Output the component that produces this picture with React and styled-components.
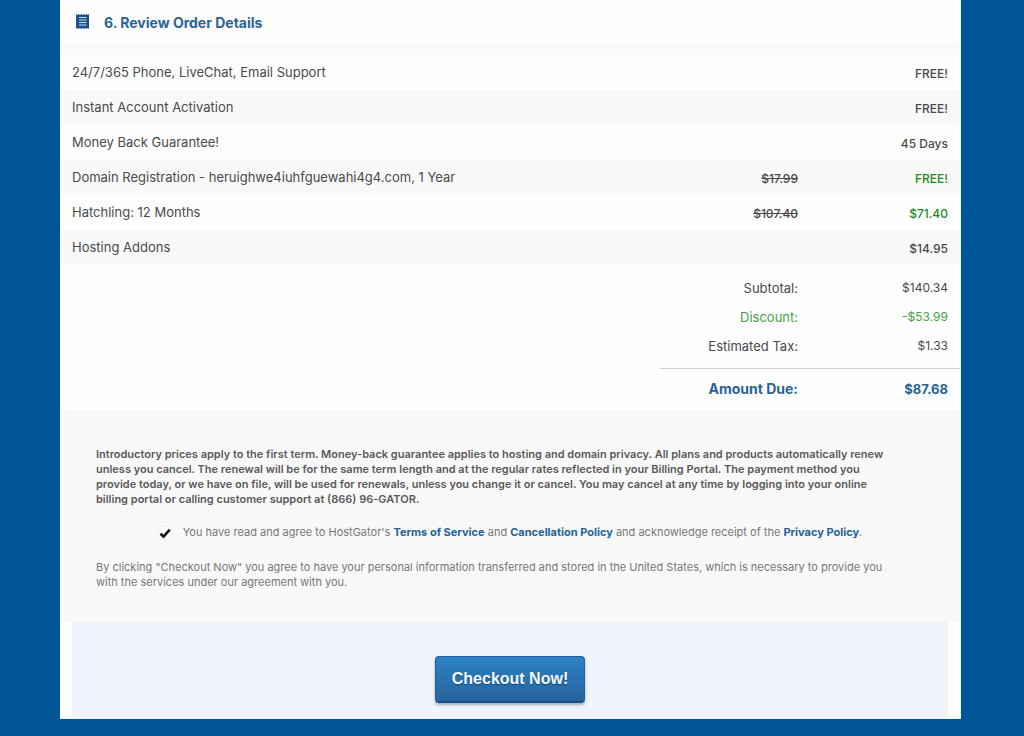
import React, { useState } from "react";
import styled, { createGlobalStyle } from "styled-components";

const GlobalStyle = createGlobalStyle`
  * {
    box-sizing: border-box;
  }
  body {
    margin: 0;
    background: #005596;
    color: #4a4a4a;
    font-family: Inter, "Liberation Sans", sans-serif;
    font-size: 13px;
  }
`;

const Page = styled.main`
  padding: 0 63px 17px 60px;
`;

const Card = styled.section`
  background: #fefefe;
  border: solid #e6f6fc;
  border-width: 0 1px 1px 0;
`;

const Header = styled.header`
  display: flex;
  align-items: center;
  gap: 14px;
  height: 55px;
  padding: 0 15px;
  border-bottom: 12px solid #f9f9f9;
`;

const Title = styled.h2`
  margin: 0;
  padding-top: 2px;
  color: #2a6396;
  font-size: 14px;
  font-weight: 700;
  line-height: 20px;
`;

const Table = styled.table`
  width: 100%;
  table-layout: fixed;
  border-collapse: collapse;
`;

const LabelCol = styled.col`
  width: 66.667%;
`;

const Row = styled.tr`
  height: 35px;
  &:nth-child(even) {
    background: #f9f9f9;
  }
`;

const Label = styled.th`
  padding: 0 12px 1px;
  font-weight: 400;
  text-align: left;
`;

const Price = styled.td`
  padding: 2px 12px 0;
  color: ${({ $free }) => ($free ? "#228b22" : "#4a4a4a")};
  font-size: 12px;
  font-weight: 500;
  text-align: right;
`;

const Totals = styled.dl`
  margin: 0;
  padding: 8px 0 0;
`;

const TotalRow = styled.div`
  display: grid;
  grid-template-columns: 1fr 1fr;
  align-items: center;
  width: 33.333%;
  height: 29px;
  margin-left: auto;
  padding: 0 12px 0 0;
  color: ${({ $discount }) => ($discount ? "#43a047" : "#4a4a4a")};
  text-align: right;

  dt {
    padding-right: 6px;
    white-space: nowrap;
  }
  dd {
    margin: 0;
    font-size: 12px;
  }
`;

const AmountDue = styled(TotalRow)`
  height: 42px;
  margin-top: 8px;
  padding-bottom: 2px;
  border-top: 1px solid #cfd1d1;
  color: #2a6396;
  font-size: 14px;
  font-weight: 700;

  dd {
    font-size: 13px;
  }
`;

const Legal = styled.div`
  padding: 37px 36px 32px;
  background: #f9f9f9;
  font-size: 11px;
  line-height: 15px;
`;

const Terms = styled.p`
  margin: 0;
  padding-right: 26px;
  color: #5a5a5a;
  font-weight: 600;
`;

const Consent = styled.p`
  margin: 0;
  padding-right: 26px;
  color: #777;
`;

const Agree = styled.div`
  display: flex;
  align-items: center;
  justify-content: center;
  gap: 11px;
  margin: 18px 0 20px;
  color: #777;
`;

const Checkbox = styled.input`
  appearance: none;
  display: grid;
  place-items: center;
  width: 14px;
  height: 14px;
  margin: 0;
  background: #fefefe;
  border: 1px solid #f1f1f1;
  border-radius: 2px;

  &:checked {
    background: #fefefe
      url("data:image/svg+xml,%3Csvg xmlns='http://www.w3.org/2000/svg' viewBox='0 0 12 12'%3E%3Cpath d='M1.5 6.8l3 2.8L10.8 2.6' fill='none' stroke='%23111' stroke-width='2.6'/%3E%3C/svg%3E")
      center / 12px no-repeat;
  }
`;

const Link = styled.a`
  color: #1f6397;
  font-weight: 700;
  text-decoration: none;
`;

const Footer = styled.footer`
  display: flex;
  justify-content: center;
  margin: 0 12px;
  padding: 34px 0 15px;
  background: #eff5fa;
`;

const Button = styled.button`
  height: 47px;
  padding: 0 16px;
  border: 1px solid #245f9a;
  border-bottom: 2px solid #1c4f8a;
  border-radius: 4px;
  background: linear-gradient(#2c82c3, #27639f);
  box-shadow: 0 2px 3px rgba(40, 60, 100, 0.4);
  color: #f4fbff;
  font: bold 16px "Liberation Sans", sans-serif;
  text-shadow: 0 1px 1px rgba(0, 40, 90, 0.6);
  white-space: nowrap;
`;

const items = [
  { label: "24/7/365 Phone, LiveChat, Email Support", price: "FREE!" },
  { label: "Instant Account Activation", price: "FREE!" },
  { label: "Money Back Guarantee!", price: "45 Days" },
  {
    label: "Domain Registration - heruighwe4iuhfguewahi4g4.com, 1 Year",
    was: "$17.99",
    price: "FREE!",
  },
  { label: "Hatchling: 12 Months", was: "$107.40", price: "$71.40" },
  { label: "Hosting Addons", price: "$14.95" },
];

const ReceiptIcon = () => (
  <svg width="15" height="17" viewBox="0 0 15 17" aria-hidden="true">
    <path
      d="M1 1l1.3 1L3.6 1l1.3 1 1.3-1 1.3 1 1.3-1 1.3 1 1.3-1 1.3 1L14 1v15l-1.3-1-1.3 1-1.3-1-1.3 1-1.3-1-1.3 1-1.3-1-1.3 1-1.3-1L1 16z"
      fill="#1d5288"
    />
    <path d="M4 4.5h7.5M4 7h7.5M4 9.5h7.5M4 12h7.5" stroke="#c3def0" strokeWidth="1.2" />
  </svg>
);

const App = () => {
  const [agreed, setAgreed] = useState(true);

  return (
    <>
      <GlobalStyle />
      <Page>
        <Card>
          <Header>
            <ReceiptIcon />
            <Title>6. Review Order Details</Title>
          </Header>
          <Table>
            <colgroup>
              <LabelCol />
              <col />
              <col />
            </colgroup>
            <tbody>
              {items.map(({ label, was, price }) => (
                <Row key={label}>
                  <Label scope="row">{label}</Label>
                  <Price>{was && <s>{was}</s>}</Price>
                  <Price $free={Boolean(was)}>{price}</Price>
                </Row>
              ))}
            </tbody>
          </Table>
          <Totals>
            <TotalRow>
              <dt>Subtotal:</dt>
              <dd>$140.34</dd>
            </TotalRow>
            <TotalRow $discount>
              <dt>Discount:</dt>
              <dd>-$53.99</dd>
            </TotalRow>
            <TotalRow>
              <dt>Estimated Tax:</dt>
              <dd>$1.33</dd>
            </TotalRow>
            <AmountDue>
              <dt>Amount Due:</dt>
              <dd>$87.68</dd>
            </AmountDue>
          </Totals>
          <Legal>
            <Terms>
              Introductory prices apply to the first term. Money-back guarantee
              applies to hosting and domain privacy. All plans and products
              automatically renew unless you cancel. The renewal will be for the
              same term length and at the regular rates reflected in your Billing
              Portal. The payment method you provide today, or we have on file,
              will be used for renewals, unless you change it or cancel. You may
              cancel at any time by logging into your online billing portal or
              calling customer support at (866) 96-GATOR.
            </Terms>
            <Agree>
              <Checkbox
                type="checkbox"
                id="agree"
                checked={agreed}
                onChange={(e) => setAgreed(e.target.checked)}
              />
              <label htmlFor="agree">
                You have read and agree to HostGator's{" "}
                <Link href="#terms">Terms of Service</Link> and{" "}
                <Link href="#cancellation">Cancellation Policy</Link> and
                acknowledge receipt of the{" "}
                <Link href="#privacy">Privacy Policy</Link>.
              </label>
            </Agree>
            <Consent>
              By clicking "Checkout Now" you agree to have your personal
              information transferred and stored in the United States, which is
              necessary to provide you with the services under our agreement with
              you.
            </Consent>
          </Legal>
          <Footer>
            <Button type="button">Checkout Now!</Button>
          </Footer>
        </Card>
      </Page>
    </>
  );
};

export default App;
